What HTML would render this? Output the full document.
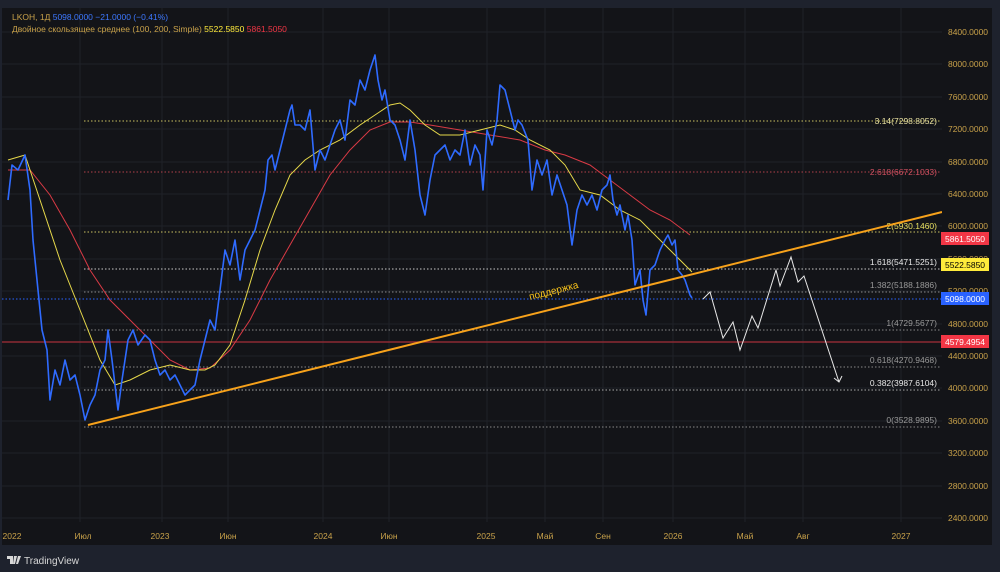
<!DOCTYPE html><html><head><meta charset="utf-8"><style>
html,body{margin:0;padding:0;background:#1e222d;}
svg{display:block;font-family:"Liberation Sans","DejaVu Sans",sans-serif;}
</style></head><body>
<svg width="1000" height="572" viewBox="0 0 1000 572" xmlns="http://www.w3.org/2000/svg">
<rect width="1000" height="572" fill="#1e222d"/>
<rect x="2" y="8" width="990" height="537" fill="#131418"/>
<g stroke="#1f2228" stroke-width="1">
<line x1="2" x2="942" y1="32" y2="32"/><line x1="2" x2="942" y1="64" y2="64"/><line x1="2" x2="942" y1="97" y2="97"/><line x1="2" x2="942" y1="129" y2="129"/><line x1="2" x2="942" y1="162" y2="162"/><line x1="2" x2="942" y1="194" y2="194"/><line x1="2" x2="942" y1="226" y2="226"/><line x1="2" x2="942" y1="259" y2="259"/><line x1="2" x2="942" y1="291" y2="291"/><line x1="2" x2="942" y1="324" y2="324"/><line x1="2" x2="942" y1="356" y2="356"/><line x1="2" x2="942" y1="388" y2="388"/><line x1="2" x2="942" y1="421" y2="421"/><line x1="2" x2="942" y1="453" y2="453"/><line x1="2" x2="942" y1="486" y2="486"/><line x1="2" x2="942" y1="518" y2="518"/>
<line y1="8" y2="522" x1="80" x2="80"/><line y1="8" y2="522" x1="162" x2="162"/><line y1="8" y2="522" x1="228" x2="228"/><line y1="8" y2="522" x1="323" x2="323"/><line y1="8" y2="522" x1="389" x2="389"/><line y1="8" y2="522" x1="487" x2="487"/><line y1="8" y2="522" x1="545" x2="545"/><line y1="8" y2="522" x1="603" x2="603"/><line y1="8" y2="522" x1="673" x2="673"/><line y1="8" y2="522" x1="745" x2="745"/><line y1="8" y2="522" x1="803" x2="803"/><line y1="8" y2="522" x1="901" x2="901"/>
</g>
<g stroke-width="1" stroke-dasharray="1.5 2" fill="none">
<line x1="84" x2="940" y1="121" y2="121" stroke="#c9c060"/>
<line x1="84" x2="940" y1="172" y2="172" stroke="#b0404a"/>
<line x1="84" x2="940" y1="232" y2="232" stroke="#c9c060"/>
<line x1="84" x2="940" y1="269" y2="269" stroke="#c8c8c8"/>
<line x1="84" x2="940" y1="292" y2="292" stroke="#888"/>
<line x1="2" x2="942" y1="299" y2="299" stroke="#2962ff"/>
<line x1="84" x2="940" y1="330" y2="330" stroke="#888"/>
<line x1="84" x2="940" y1="367" y2="367" stroke="#888"/>
<line x1="84" x2="940" y1="390" y2="390" stroke="#aaa"/>
<line x1="84" x2="940" y1="427" y2="427" stroke="#888"/>
</g>
<line x1="2" x2="942" y1="342" y2="342" stroke="#8c2a32" stroke-width="1.5"/>
<g font-size="8.5" text-anchor="end">
<text x="937" y="124" fill="#e8e0a0">3.14(7298.8052)</text>
<text x="937" y="175" fill="#d05060">2.618(6672.1033)</text>
<text x="937" y="229" fill="#e8e060">2(5930.1460)</text>
<text x="937" y="265" fill="#e8e8e8">1.618(5471.5251)</text>
<text x="937" y="288" fill="#9a9a9a">1.382(5188.1886)</text>
<text x="937" y="326" fill="#9a9a9a">1(4729.5677)</text>
<text x="937" y="363" fill="#9a9a9a">0.618(4270.9468)</text>
<text x="937" y="386" fill="#e8e8e8">0.382(3987.6104)</text>
<text x="937" y="423" fill="#9a9a9a">0(3528.9895)</text>
</g>
<polyline fill="none" stroke="#d93a45" stroke-width="1" points="8,170 30,170 50,195 70,230 90,270 110,300 130,320 150,340 170,360 190,370 210,368 230,350 250,320 270,280 290,245 310,210 330,175 350,150 370,130 390,122 410,122 430,125 460,130 490,135 520,140 545,150 565,155 590,165 610,180 630,195 650,210 670,220 690,235"/>
<polyline fill="none" stroke="#e6d84a" stroke-width="1" points="8,160 25,155 40,200 60,260 80,310 100,360 115,385 130,380 150,370 170,365 190,370 205,370 215,365 230,345 245,300 260,250 275,210 290,175 305,160 320,150 340,140 360,125 375,115 390,105 400,103 410,110 425,125 440,135 460,135 480,130 500,125 515,130 530,140 550,150 565,165 580,190 600,195 620,210 640,220 660,240 680,260 692,272"/>
<polyline fill="none" stroke="#2f6bff" stroke-width="1.6" stroke-linejoin="round" points="8,200 12,165 18,170 25,155 30,190 33,240 38,290 42,330 47,350 50,400 55,370 60,385 65,360 70,380 75,375 80,395 85,420 90,405 95,395 100,370 105,360 108,330 112,360 118,410 122,380 128,340 133,330 138,345 145,335 150,340 155,360 160,375 165,370 170,380 175,375 180,385 185,395 190,390 195,385 200,360 205,340 210,320 215,330 220,290 225,250 230,265 235,240 240,280 245,250 250,240 255,230 260,210 265,190 268,160 272,155 275,170 280,150 285,130 290,110 292,105 295,125 300,125 305,130 310,110 315,170 320,150 325,160 330,145 335,130 340,120 345,140 350,100 355,105 360,80 365,90 370,70 375,55 378,80 382,100 385,90 390,120 395,125 400,140 405,160 410,120 415,150 420,195 425,215 430,180 435,155 440,150 445,145 450,160 455,150 460,155 465,130 470,165 475,145 480,155 483,190 487,130 492,145 497,120 500,85 505,90 510,110 515,130 518,120 522,125 528,140 532,190 537,160 542,175 547,160 552,195 557,175 562,190 567,205 572,245 577,210 582,195 587,205 592,195 597,210 602,190 607,185 610,175 613,200 617,215 620,205 625,230 628,215 632,240 635,285 640,270 643,300 646,315 650,270 655,265 660,250 665,240 668,235 672,245 675,240 678,270 682,275 685,280 690,295 692,298"/>
<line x1="88" y1="425" x2="942" y2="212" stroke="#f7a21b" stroke-width="2"/>
<text x="530" y="300" fill="#f7c21b" font-size="10" transform="rotate(-14 530 300)">поддержка</text>
<polyline fill="none" stroke="#e8e8e8" stroke-width="1" points="703,299 710,292 723,338 733,322 740,350 752,316 758,328 776,270 780,286 791,257 798,282 804,276 839,382"/>
<polyline fill="none" stroke="#e8e8e8" stroke-width="1" points="834,378 839,382 842,376"/>
<rect x="942" y="8" width="50" height="537" fill="#131418"/>
<g font-size="8.5" fill="#c9a24a">
<text x="948" y="35" textLength="40">8400.0000</text><text x="948" y="67" textLength="40">8000.0000</text><text x="948" y="100" textLength="40">7600.0000</text><text x="948" y="132" textLength="40">7200.0000</text><text x="948" y="165" textLength="40">6800.0000</text><text x="948" y="197" textLength="40">6400.0000</text><text x="948" y="229" textLength="40">6000.0000</text><text x="948" y="262" textLength="40">5600.0000</text><text x="948" y="294" textLength="40">5200.0000</text><text x="948" y="327" textLength="40">4800.0000</text><text x="948" y="359" textLength="40">4400.0000</text><text x="948" y="391" textLength="40">4000.0000</text><text x="948" y="424" textLength="40">3600.0000</text><text x="948" y="456" textLength="40">3200.0000</text><text x="948" y="489" textLength="40">2800.0000</text><text x="948" y="521" textLength="40">2400.0000</text>
</g>
<rect x="941" y="232" width="48" height="13" fill="#f23645"/><text x="945" y="242" font-size="8.5" fill="#fff" textLength="40">5861.5050</text>
<rect x="941" y="258" width="48" height="13" fill="#ffeb3b"/><text x="945" y="268" font-size="8.5" fill="#000" textLength="40">5522.5850</text>
<rect x="941" y="292" width="48" height="13" fill="#2962ff"/><text x="945" y="302" font-size="8.5" fill="#fff" textLength="40">5098.0000</text>
<rect x="941" y="335" width="48" height="13" fill="#f23645"/><text x="945" y="345" font-size="8.5" fill="#fff" textLength="40">4579.4954</text>
<g font-size="8.5" fill="#c9a24a" text-anchor="middle">
<text x="12" y="539">2022</text><text x="83" y="539">Июл</text><text x="160" y="539">2023</text><text x="228" y="539">Июн</text><text x="323" y="539">2024</text><text x="389" y="539">Июн</text><text x="486" y="539">2025</text><text x="545" y="539">Май</text><text x="603" y="539">Сен</text><text x="673" y="539">2026</text><text x="745" y="539">Май</text><text x="803" y="539">Авг</text><text x="901" y="539">2027</text>
</g>
<text x="12" y="20" font-size="8.5" fill="#c9a24a">LKOH, 1Д <tspan fill="#3d78ff">5098.0000  −21.0000 (−0.41%)</tspan></text>
<text x="12" y="32" font-size="8.5" fill="#c9a24a">Двойное скользящее среднее (100, 200, Simple) <tspan fill="#ffeb3b">5522.5850</tspan> <tspan fill="#f23645">5861.5050</tspan></text>
<g fill="#d8d8d8"><path d="M7 556h6v8h-3v-5h-3z"/><path d="M14 556h3l-2 8h-2z"/><path d="M18 556h3l-3 8h-2z"/></g>
<text x="24" y="564" font-size="10" fill="#d8d8d8">TradingView</text>
</svg>
</body></html>
